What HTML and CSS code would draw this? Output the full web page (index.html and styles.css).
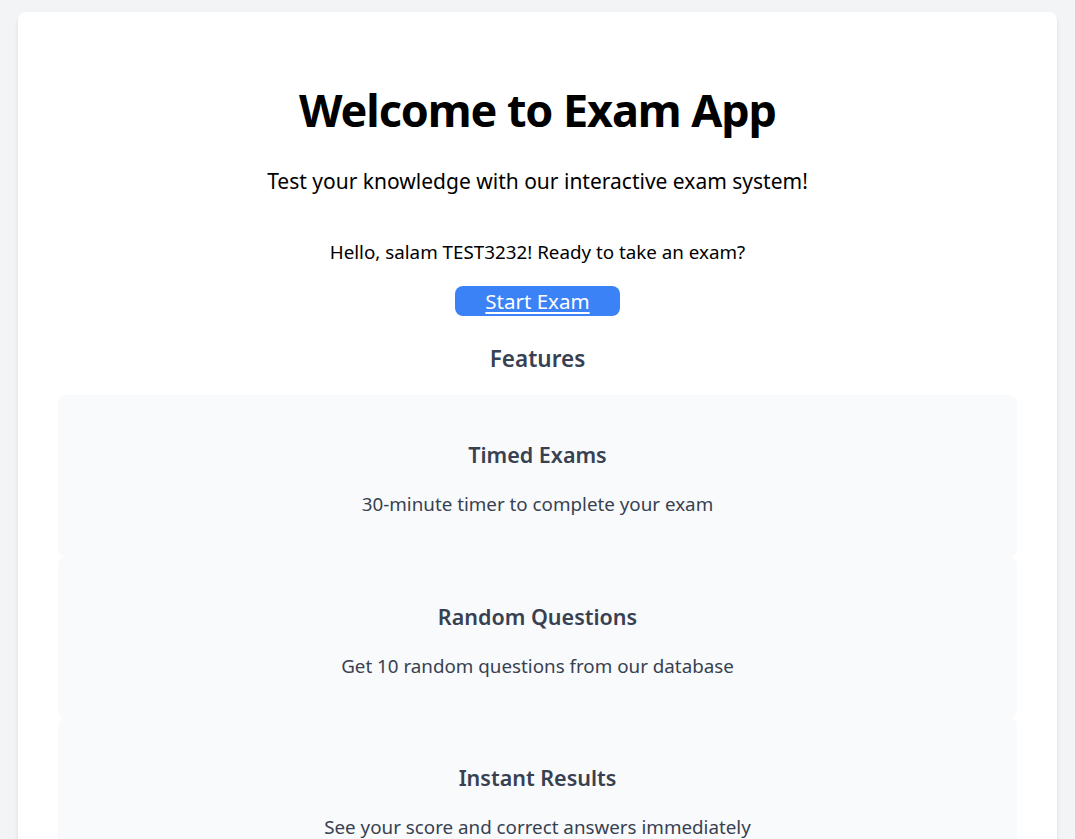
FILE: index.html
```html
<!DOCTYPE html>
<html lang="en">
<head>
<meta charset="utf-8">
<title>Exam App</title>
<link rel="stylesheet" href="styles.css">
</head>
<body>
<main class="panel">
  <h1 class="title">Welcome to Exam App</h1>
  <p class="subtitle">Test your knowledge with our interactive exam system!</p>
  <p class="greeting">Hello, salam TEST3232! Ready to take an exam?</p>
  <div class="actions"><a class="start-btn" href="#">Start Exam</a></div>
  <h2 class="features-title">Features</h2>
  <section class="features">
    <div class="feature">
      <h3 class="feature-title">Timed Exams</h3>
      <p class="feature-desc">30-minute timer to complete your exam</p>
    </div>
    <div class="feature">
      <h3 class="feature-title">Random Questions</h3>
      <p class="feature-desc">Get 10 random questions from our database</p>
    </div>
    <div class="feature">
      <h3 class="feature-title">Instant Results</h3>
      <p class="feature-desc">See your score and correct answers immediately</p>
    </div>
  </section>
</main>
</body>
</html>
```
FILE: styles.css
```css
* { box-sizing: border-box; }
html, body { margin: 0; padding: 0; }
body {
  background: #f3f4f6;
  font-family: "Noto Sans", "Open Sans", sans-serif;
  color: #000;
  padding: 12px 18px 0;
}
.panel {
  background: #fff;
  border-radius: 8px;
  box-shadow: 0 4px 6px -1px rgba(0,0,0,0.1), 0 2px 4px -2px rgba(0,0,0,0.1);
  padding: 70px 40px 40px;
  text-align: center;
}
.title {
  margin: 0;
  font-size: 45px;
  line-height: 56px;
  font-weight: 700;
  letter-spacing: -1.1px;
}
.subtitle {
  margin: 29px 0 0;
  font-size: 21px;
  line-height: 28px;
}
.greeting {
  margin: 45px 0 0;
  font-size: 18.8px;
  line-height: 24px;
}
.actions { margin-top: 22px; }
.start-btn {
  display: inline-block;
  width: 165px;
  height: 30px;
  line-height: 30px;
  background: #3b82f6;
  color: #fff;
  border-radius: 8px;
  font-size: 20.5px;
  text-decoration: underline;
  text-underline-offset: 3px;
}
.features-title {
  margin: 27px 0 0;
  font-size: 22.5px;
  line-height: 32px;
  font-weight: 600;
  color: #374151;
}
.features {
  margin-top: 20px;
  display: flex;
  flex-direction: column;
}
.feature {
  background: #f9fafb;
  border-radius: 8px;
  height: 161.5px;
  padding-top: 46px;
}
.feature-title {
  margin: 0;
  font-size: 21.5px;
  line-height: 28px;
  font-weight: 600;
  color: #374151;
}
.feature-desc {
  margin: 21px 0 0;
  font-size: 18.8px;
  line-height: 28px;
  color: #374151;
}
```
